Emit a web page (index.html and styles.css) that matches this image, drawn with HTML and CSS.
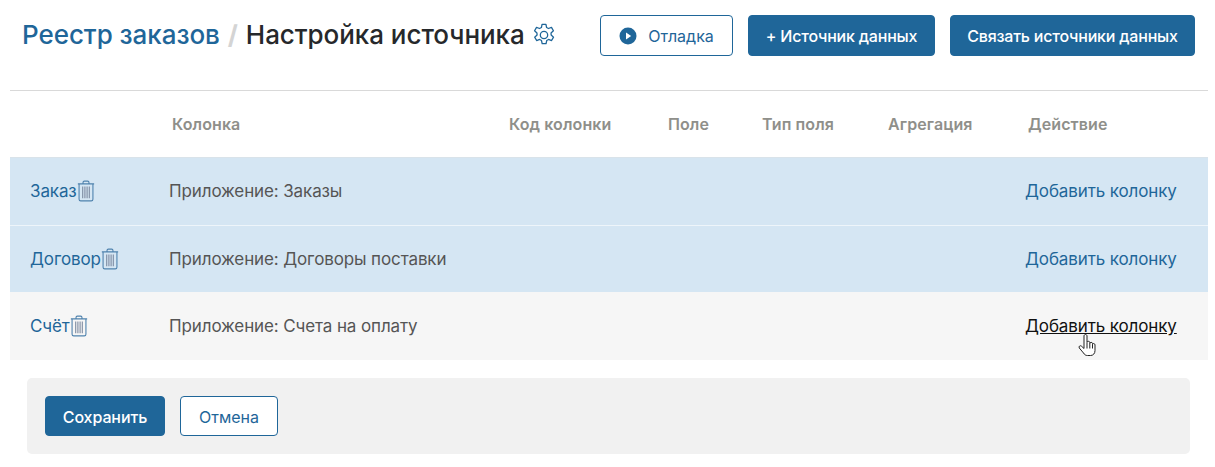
FILE: index.html
```html
<!DOCTYPE html>
<html lang="ru">
<head>
<meta charset="utf-8">
<title>Настройка источника</title>
<link rel="stylesheet" href="styles.css">
</head>
<body>
<svg class="defs" width="0" height="0" aria-hidden="true">
  <symbol id="trash" viewBox="0 0 16 20">
    <path d="M.6 3.5h14.8M5.3 3.3V2.2c0-.7.5-1.2 1.2-1.2h3c.7 0 1.2.5 1.2 1.2v1.1M1.7 3.7v13.8c0 .9.6 1.5 1.5 1.5h9.6c.9 0 1.5-.6 1.5-1.5V3.7" fill="none" stroke="currentColor" stroke-width="1"/>
    <path d="M5 6v10.5M7 6v10.5M9 6v10.5M11 6v10.5" fill="none" stroke="#7d8aa0" stroke-width="1"/>
  </symbol>
</svg>
<main class="page">
  <header class="topbar">
    <h1 class="title"><a class="title-link">Реестр заказов</a><span class="slash">/</span><span>Настройка источника</span>
      <svg class="gear" viewBox="0 0 24 24" width="26" height="26" fill="none" stroke="#1f6699" stroke-width="1.200" stroke-linejoin="round"><path d="M10.200 2h3.600l.6 2.900 1.700.9 2.800-1 1.800 3.100-2.200 2 .1 1.900 2.200 2-1.800 3.100-2.800-1-1.700 1-.6 2.900h-3.600l-.6-2.900-1.700-1-2.800 1-1.800-3.100 2.200-2-.1-1.900-2.200-2 1.800-3.100 2.800 1 1.700-.9z" transform="translate(0 .2)"/><circle cx="12" cy="12" r="3.400"/></svg>
    </h1>
    <div class="actions">
      <button class="btn btn-outline btn-debug"><svg class="play" viewBox="0 0 18 18" width="18" height="18"><circle cx="9" cy="9" r="8.500" fill="#1f6699"/><path d="M7 5.600 12.200 9 7 12.400z" fill="#fff"/></svg>Отладка</button>
      <button class="btn btn-primary btn-source">+ Источник данных</button>
      <button class="btn btn-primary btn-link">Связать источники данных</button>
    </div>
  </header>

  <section class="table">
    <div class="row head">
      <div></div>
      <div class="hcell">Колонка</div>
      <div class="hcell">Код колонки</div>
      <div class="hcell">Поле</div>
      <div class="hcell">Тип поля</div>
      <div class="hcell">Агрегация</div>
      <div class="hcell">Действие</div>
    </div>
    <div class="row body selected">
      <div class="name"><a>Заказ</a><svg class="trash"><use href="#trash"/></svg></div>
      <div class="wide">Приложение: Заказы</div>
      <a class="action">Добавить колонку</a>
    </div>
    <div class="row body selected">
      <div class="name"><a>Договор</a><svg class="trash"><use href="#trash"/></svg></div>
      <div class="wide">Приложение: Договоры поставки</div>
      <a class="action">Добавить колонку</a>
    </div>
    <div class="row body hovered">
      <div class="name"><a>Счёт</a><svg class="trash"><use href="#trash"/></svg></div>
      <div class="wide">Приложение: Счета на оплату</div>
      <a class="action action-hover">Добавить колонку
        <svg class="cursor" viewBox="0 0 18 24" width="18" height="24"><path d="M6 13V3c0-2 3-2 3 0v6.500c0-1.600 2.800-1.600 2.800 0v1c0-1.500 2.700-1.500 2.700 0v1c0-1.300 2.500-1.300 2.500.4v5.600c0 3-1.800 5-4.500 5H9.500c-2 0-3-.9-4-2.500L1.300 15c-1-1.600 1-3 2.200-1.800L6 15.500z" fill="#fff" stroke="#222" stroke-width="1" stroke-linejoin="round"/><path d="M9 10v5.500M11.800 10.500v5M14.500 11.500v4" stroke="#222" stroke-width="1" fill="none"/></svg>
      </a>
    </div>
  </section>

  <footer class="footer">
    <button class="btn btn-primary btn-save">Сохранить</button>
    <button class="btn btn-outline btn-cancel">Отмена</button>
  </footer>
</main>
</body>
</html>
```
FILE: styles.css
```css
* { box-sizing: border-box; }
html, body { margin: 0; padding: 0; background: #fff; }
body { font-family: Inter, "Liberation Sans", sans-serif; color: #222; width: 1215px; height: 467px; overflow: hidden; }
.defs { position: absolute; }
.page { padding: 0 7px 0 10px; }

.topbar { height: 91px; border-bottom: 1px solid #d9d9d9; display: flex; justify-content: space-between; align-items: flex-start; padding: 15px 13px 0 12px; }
.title { margin: 0; padding-top: 1px; height: 38px; display: flex; align-items: center; font-size: 26px; letter-spacing: -.05px; line-height: 38px; font-weight: 500; color: #26282b; white-space: nowrap; }
.title-link { color: #1f6699; }
.slash { color: #d4d4d4; margin: 0 8px; font-weight: 700; }
.gear { margin-left: 6px; }

.actions { display: flex; gap: 15px; }
.btn { height: 41px; border-radius: 4px; font-family: inherit; font-size: 16px; letter-spacing: -.2px; font-weight: 500; display: inline-flex; align-items: center; justify-content: center; padding: 0; cursor: pointer; white-space: nowrap; }
.btn-primary { background: #1f6699; border: 1px solid #1f6699; color: #fff; }
.btn-outline { background: #fff; border: 1px solid #1f6699; color: #1f6699; font-weight: 400; letter-spacing: 0; }
.btn-debug { width: 133px; gap: 11px; }
.btn-source { width: 187px; }
.btn-link { width: 245px; }

.row { display: grid; grid-template-columns: 159px 337px 159px 94px 126px 140px 183px; align-items: center; }
.head { height: 67px; border-bottom: 1px solid #d9e3ea; padding-bottom: 1px; }
.hcell { padding-left: 3px; font-size: 16px; letter-spacing: .1px; font-weight: 600; color: #8f8f8a; white-space: nowrap; }
.body { font-size: 17px; letter-spacing: -.12px; color: #555; }
.selected { background: #d5e6f3; border-bottom: 1px solid #eef5fa; height: 68px; padding-bottom: 1px; }
.selected + .selected { height: 66px; border-bottom: 0; padding-bottom: 0; }
.hovered { background: #f6f6f6; height: 68px; }
.name { padding-left: 20px; display: flex; align-items: center; color: #1f6699; }
.trash { width: 18px; height: 22px; color: #4f82ad; flex: none; }
.wide { grid-column: 2 / 7; white-space: nowrap; }
.action { color: #1f6699; white-space: nowrap; position: relative; }
.action-hover { color: #111; text-decoration: underline; }
.cursor { position: absolute; left: 53px; top: 17px; }

.footer { margin: 18px 18px 0 17px; height: 76px; background: #f1f1f1; border-radius: 5px; display: flex; align-items: center; gap: 15px; padding: 0 18px; }
.footer .btn { height: 40px; font-size: 16px; letter-spacing: 0; padding-top: 1px; }
.footer .btn-save { letter-spacing: -.1px; }
.btn-save { width: 120px; }
.btn-cancel { width: 98px; }
```
